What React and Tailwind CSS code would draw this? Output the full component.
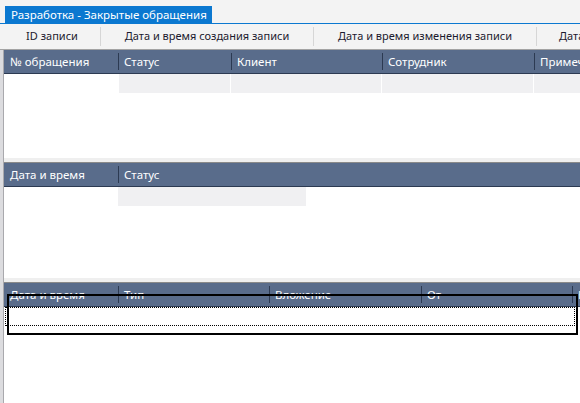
import React from "react";

const font = { fontFamily: '"Segoe UI", "Noto Sans", "Open Sans", sans-serif' };

const HeaderRow = ({ cols }) => (
  <div className="flex h-[24px] bg-[#596c8b] border-b border-[#2c3a52] text-white text-[11.5px] overflow-hidden whitespace-nowrap">
    {cols.map((c, i) => (
      <div
        key={i}
        className={`flex items-center shrink-0 ${c.w ? c.w : "flex-1"}`}
      >
        {i > 0 && <div className="w-px h-[17px] bg-[#2c3a52] shrink-0" />}
        <span className={i > 0 ? "pl-[5px]" : "pl-[6px]"}>{c.t}</span>
      </div>
    ))}
  </div>
);

const Splitter = () => (
  <div className="h-[5px] bg-[#efefef] border-b border-[#8a8a8a] shrink-0" />
);

const App = () => {
  return (
    <div className="w-[580px] h-[403px] bg-white overflow-hidden flex flex-col" style={font}>
      {/* tab strip */}
      <div className="h-[24px] bg-[#f3f3f3] flex items-end border-b border-[#0b78d0] pl-[5px] shrink-0">
        <div className="h-[17px] w-[207px] bg-[#0b78d0] text-white text-[11.5px] leading-[17px] pl-[6px] whitespace-nowrap">
          Разработка - Закрытые обращения
        </div>
      </div>

      {/* toolbar */}
      <div className="h-[26px] bg-[#f3f3f3] flex items-center text-[11px] text-[#1b1a2e] whitespace-nowrap border-b border-[#a3a3a3] shrink-0 pl-[4px] overflow-hidden">
        <div className="w-[96px] text-center shrink-0">ID записи</div>
        <div className="w-px h-[19px] bg-[#d6d6d6] shrink-0" />
        <div className="w-[212px] text-center shrink-0">Дата и время создания записи</div>
        <div className="w-px h-[19px] bg-[#d6d6d6] shrink-0" />
        <div className="w-[222px] text-center shrink-0">Дата и время изменения записи</div>
        <div className="w-px h-[19px] bg-[#d6d6d6] shrink-0" />
        <div className="pl-[22px] shrink-0">Дата и время</div>
      </div>

      <div className="flex flex-1 min-h-0">
        {/* left edge */}
        <div className="w-[4px] bg-[#dcdcdf] border-r border-[#a9a9ad] shrink-0" />

        <div className="flex-1 flex flex-col min-w-0">
          {/* panel 1 */}
          <div className="h-[108px] flex flex-col shrink-0">
            <HeaderRow
              cols={[
                { t: "№ обращения", w: "w-[114px]" },
                { t: "Статус", w: "w-[113px]" },
                { t: "Клиент", w: "w-[151px]" },
                { t: "Сотрудник", w: "w-[152px]" },
                { t: "Примечание" },
              ]}
            />
            <div className="flex h-[19px]">
              <div className="w-[115px] shrink-0" />
              <div className="w-[112px] shrink-0 bg-[#f0f0f2] border-r border-white" />
              <div className="w-[151px] shrink-0 bg-[#f0f0f2] border-r border-white" />
              <div className="w-[152px] shrink-0 bg-[#f0f0f2] border-r border-white" />
              <div className="flex-1 bg-[#f0f0f2]" />
            </div>
          </div>

          <Splitter />

          {/* panel 2 */}
          <div className="h-[115px] flex flex-col shrink-0">
            <HeaderRow
              cols={[
                { t: "Дата и время", w: "w-[114px]" },
                { t: "Статус" },
              ]}
            />
            <div className="flex h-[19px]">
              <div className="w-[114px] shrink-0" />
              <div className="w-[188px] shrink-0 bg-[#f0f0f2]" />
            </div>
          </div>

          <Splitter />

          {/* panel 3 */}
          <div className="flex-1 flex flex-col relative">
            <HeaderRow
              cols={[
                { t: "Дата и время", w: "w-[114px]" },
                { t: "Тип", w: "w-[151px]" },
                { t: "Вложение", w: "w-[152px]" },
                { t: "От", w: "w-[151px]" },
                { t: "Кому" },
              ]}
            />
            {/* focus row */}
            <div className="absolute left-[1px] top-[24px] w-[570px] h-[19px] border border-dotted border-black" />
            {/* selection frame */}
            <div className="absolute left-[3px] top-[11px] w-[571px] h-[41px] border-2 border-black" />
          </div>
        </div>
      </div>
    </div>
  );
};

export default App;
